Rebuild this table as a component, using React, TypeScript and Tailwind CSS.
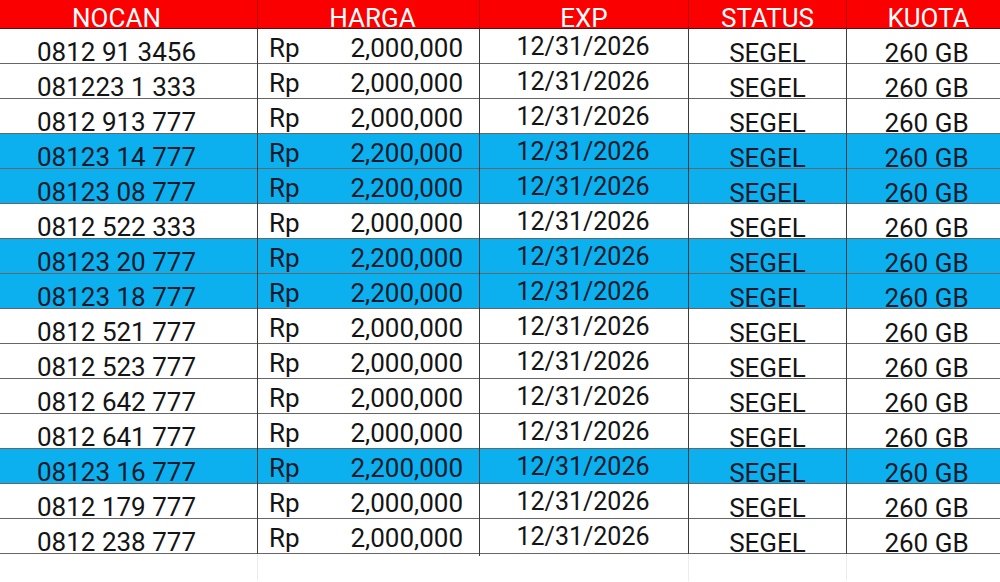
import React from 'react';

type Row = { nocan: string; harga: string; hot?: boolean };

const rows: Row[] = [
  { nocan: '0812 91 3456', harga: '2,000,000' },
  { nocan: '081223 1 333', harga: '2,000,000' },
  { nocan: '0812 913 777', harga: '2,000,000' },
  { nocan: '08123 14 777', harga: '2,200,000', hot: true },
  { nocan: '08123 08 777', harga: '2,200,000', hot: true },
  { nocan: '0812 522 333', harga: '2,000,000' },
  { nocan: '08123 20 777', harga: '2,200,000', hot: true },
  { nocan: '08123 18 777', harga: '2,200,000', hot: true },
  { nocan: '0812 521 777', harga: '2,000,000' },
  { nocan: '0812 523 777', harga: '2,000,000' },
  { nocan: '0812 642 777', harga: '2,000,000' },
  { nocan: '0812 641 777', harga: '2,000,000' },
  { nocan: '08123 16 777', harga: '2,200,000', hot: true },
  { nocan: '0812 179 777', harga: '2,000,000' },
  { nocan: '0812 238 777', harga: '2,000,000' },
];

const cols = 'grid grid-cols-[258px_222px_209px_158px_153px]';

export default function App() {
  return (
    <div
      className="w-[1000px] h-[582px] overflow-hidden bg-white text-[26px] leading-[26px]"
      style={{ fontFamily: 'Roboto, "Noto Sans", sans-serif' }}
    >
      {/* header */}
      <div className={`${cols} h-[29px] bg-[#fb0000] text-white border-b border-[#5a1010]`}>
        <div className="flex justify-center pt-[5px] pr-[24px] border-r border-[#b30000]">NOCAN</div>
        <div className="flex justify-center pt-[5px] pl-[8px] border-r border-[#b30000]">HARGA</div>
        <div className="flex justify-center pt-[5px] border-r border-[#b30000]">EXP</div>
        <div className="flex justify-center pt-[5px] border-r border-[#b30000]">STATUS</div>
        <div className="flex justify-center pt-[5px] pl-[10px]">KUOTA</div>
      </div>

      {rows.map((r) => (
        <div
          key={r.nocan}
          className={`${cols} h-[35px] border-b border-[#666666] ${
            r.hot ? 'bg-[#0db0ee] text-[#0c1a2a]' : 'bg-white text-[#141414]'
          }`}
        >
          <div className="flex justify-center pt-[10px] pr-[24px] border-r border-[#3d3d3d]">{r.nocan}</div>
          <div className="flex justify-between pt-[6px] pl-[11px] pr-[16px] border-r border-[#3d3d3d]">
            <span>Rp</span>
            <span>{r.harga}</span>
          </div>
          <div className="flex justify-center pt-[5px] pr-[2px] text-[25px] border-r border-[#3d3d3d]">12/31/2026</div>
          <div className="flex justify-center pt-[11px] border-r border-[#3d3d3d]">SEGEL</div>
          <div className="flex justify-center pt-[11px] pl-[6px]">260 GB</div>
        </div>
      ))}

      {/* empty sheet below */}
      <div className={`${cols} h-[27px]`}>
        <div className="border-r border-[#ececec]" />
        <div />
        <div className="border-r border-[#ececec]" />
        <div className="border-r border-[#ececec]" />
        <div />
      </div>
    </div>
  );
}
